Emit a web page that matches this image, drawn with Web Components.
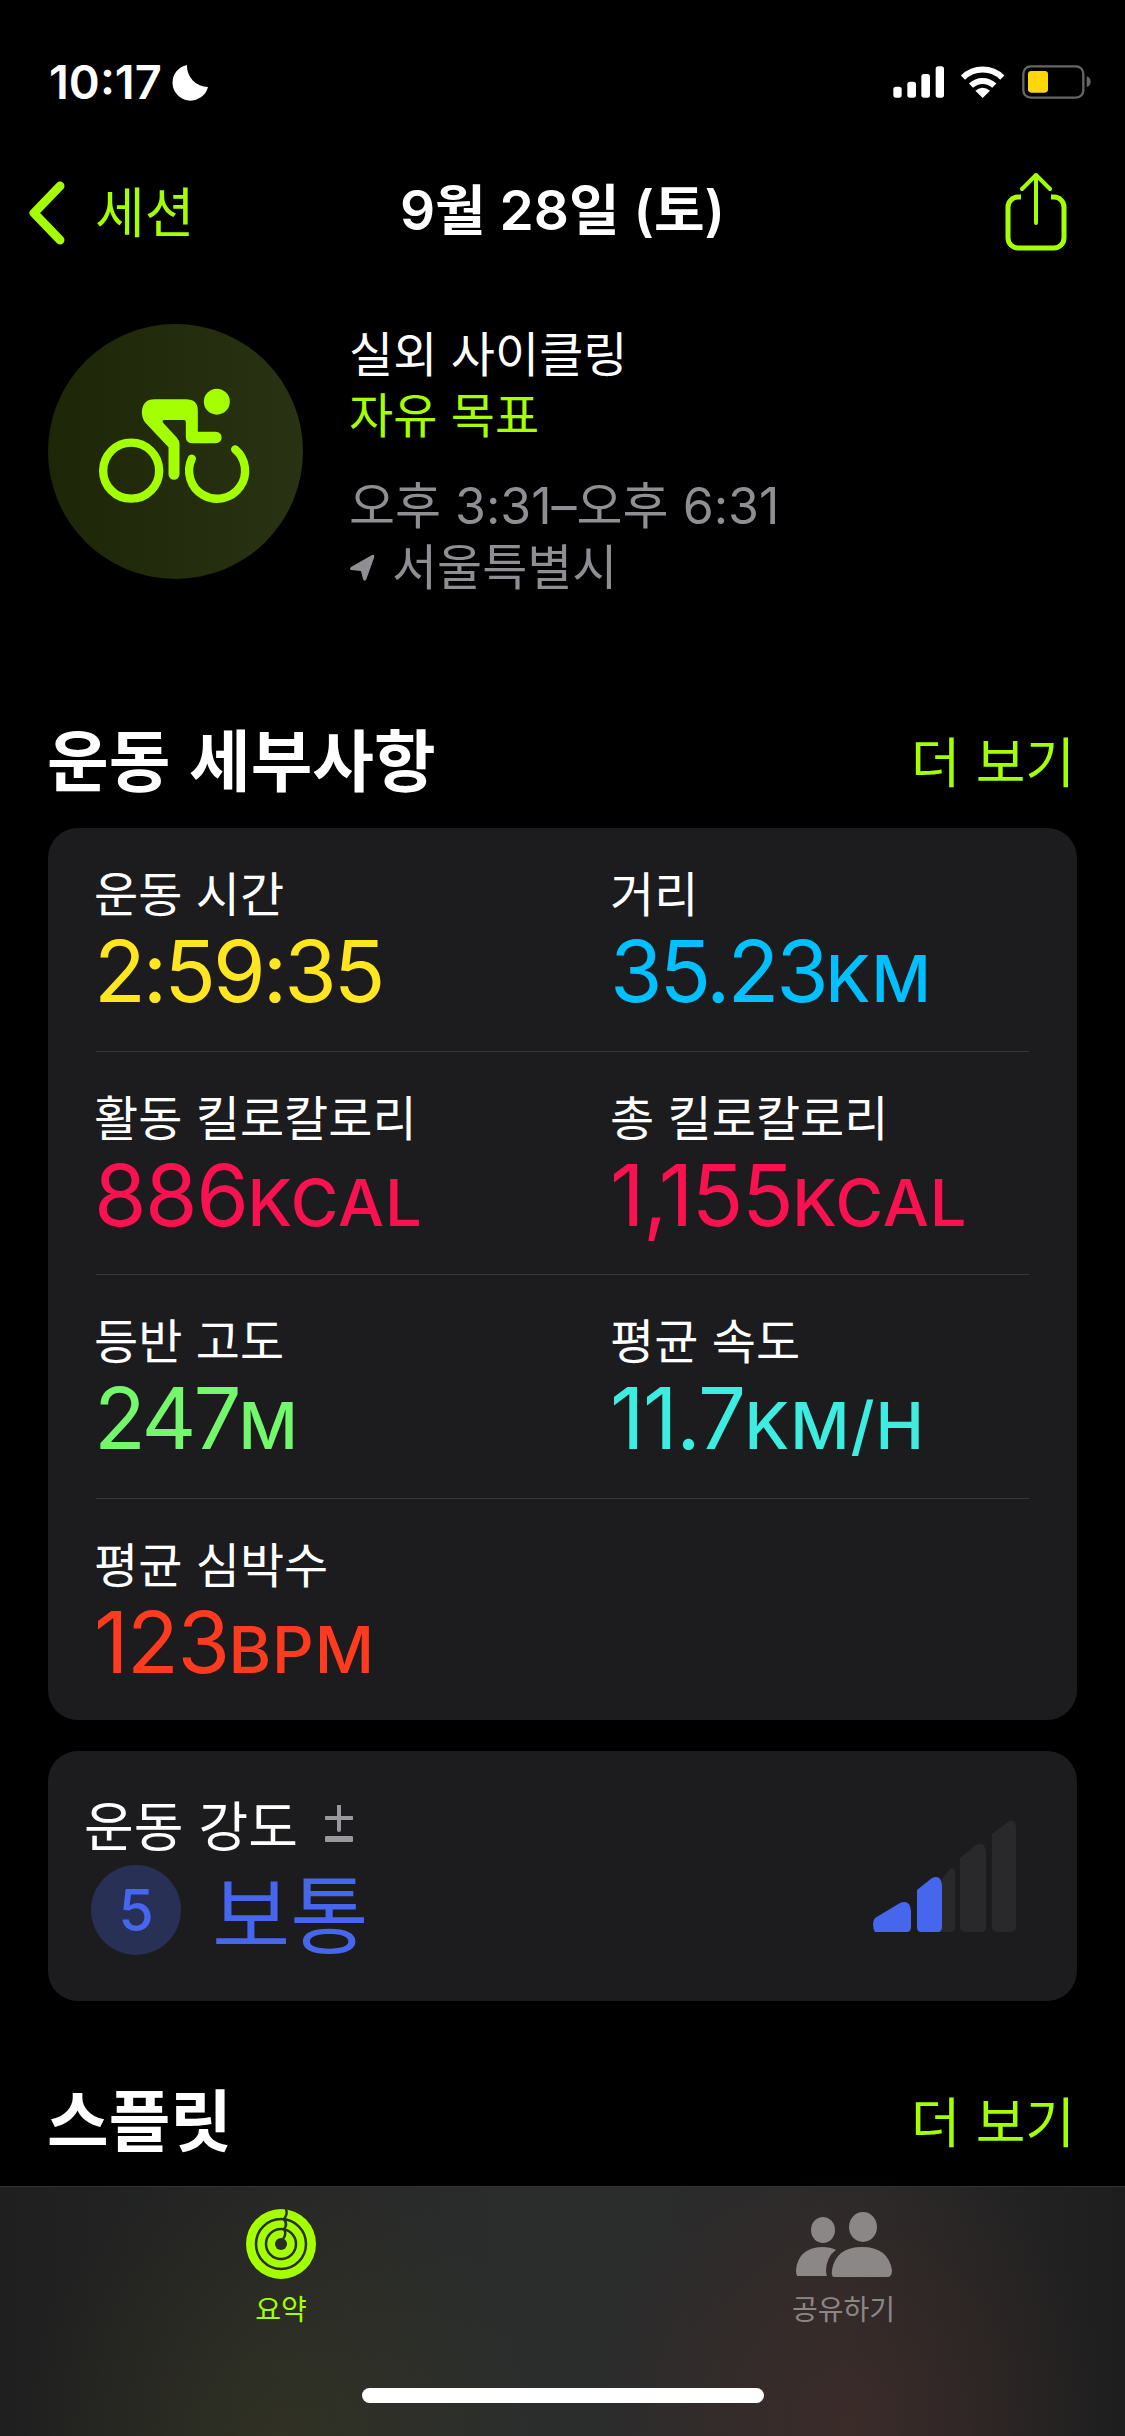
<!DOCTYPE html>
<html lang="ko">
<head>
<meta charset="utf-8">
<title>운동 세부사항</title>
<style>
    html, body {
        margin: 0;
        background: #000;
    }
    body {
        font-family: 'Inter', 'Noto Sans CJK KR', sans-serif;
        color: #fff;
    }
</style>
</head>
<body>
<workout-screen>
    <status-bar time="10:17"></status-bar>
    <nav-bar back="세션" title="9월 28일 (토)"></nav-bar>
    <workout-summary name="실외 사이클링" goal="자유 목표" hours="오후 3:31–오후 6:31" place="서울특별시"></workout-summary>
    <section-head title="운동 세부사항" style="margin-top:120px"></section-head>
    <metric-card>
        <metric-item label="운동 시간" value="2:59:35" color="#ffe620"></metric-item>
        <metric-item label="거리" value="35.23" unit="KM" color="#00c0ff"></metric-item>
        <metric-item label="활동 킬로칼로리" value="886" unit="KCAL" color="#fa1150" tracking="-1.5px"></metric-item>
        <metric-item label="총 킬로칼로리" value="1,155" unit="KCAL" color="#fa1150" tracking="-1.5px"></metric-item>
        <metric-item label="등반 고도" value="247" unit="M" color="#74f76c"></metric-item>
        <metric-item label="평균 속도" value="11.7" unit="KM/H" color="#3deee0" tracking="-1.5px"></metric-item>
        <metric-item label="평균 심박수" value="123" unit="BPM" color="#ff3b1f" tracking="-1.5px"></metric-item>
    </metric-card>
    <effort-card label="운동 강도" level="5" text="보통"></effort-card>
    <section-head title="스플릿" style="margin-top:77px"></section-head>
    <tab-bar slot="tabs"></tab-bar>
</workout-screen>
<script>
const LIME = '#a4ff00';
const KR = "'Noto Sans CJK KR'";
const LATIN = "'Inter', 'Noto Sans CJK KR', sans-serif";

class WorkoutScreen extends HTMLElement {
    connectedCallback() {
        this.attachShadow({ mode: 'open' });
        this.shadowRoot.innerHTML = `
            <style>
                :host {
                    display: flex;
                    flex-direction: column;
                    width: 1125px;
                    height: 2436px;
                    overflow: hidden;
                    background: #000;
                }
                .scroll {
                    flex: 1;
                    min-height: 0;
                    overflow: hidden;
                }
            </style>
            <div class="scroll"><slot></slot></div>
            <slot name="tabs"></slot>
        `;
    }
}

class StatusBar extends HTMLElement {
    connectedCallback() {
        this.attachShadow({ mode: 'open' });
        this.shadowRoot.innerHTML = `
            <style>
                :host {
                    display: flex;
                    justify-content: space-between;
                    height: 140px;
                }
                .left {
                    display: flex;
                    align-items: flex-start;
                    padding: 60px 0 0 49px;
                }
                .time {
                    font: 600 47px/44px ${LATIN};
                    color: #fff;
                }
                svg { display: block; }
                .moon { margin: 4px 0 0 10px; }
                .icons { margin-top: 40px; }
            </style>
            <div class="left">
                <span class="time">${this.getAttribute('time')}</span>
                <svg class="moon" width="38" height="38" viewBox="0 0 38 38">
                    <path fill="#fff" d="M15 1 A18 18 0 1 0 36 23 A21 21 0 0 1 15 1Z"/>
                </svg>
            </div>
            <svg class="icons" width="305" height="100" viewBox="0 0 915 300">
                <rect x="220" y="140" width="25" height="33" rx="8" fill="#fff"/>
                <rect x="262" y="125" width="26" height="48" rx="8" fill="#fff"/>
                <rect x="304" y="102" width="26" height="71" rx="8" fill="#fff"/>
                <rect x="347" y="79" width="25" height="94" rx="8" fill="#fff"/>
                <path d="M429 113A84 84 0 0 1 547 113M453 137A50 50 0 0 1 523 137" fill="none" stroke="#fff" stroke-width="18"/>
                <path d="M488 174L466 152Q488 134 510 152Z" fill="#fff"/>
                <rect x="610" y="79" width="180" height="94" rx="22" fill="none" stroke="#666" stroke-width="7"/>
                <rect x="624" y="93" width="60" height="65" rx="10" fill="#ffd60a"/>
                <path d="M800 109Q812 113 812 125Q812 137 800 141Z" fill="#666"/>
            </svg>
        `;
    }
}

class NavBar extends HTMLElement {
    connectedCallback() {
        this.attachShadow({ mode: 'open' });
        this.shadowRoot.innerHTML = `
            <style>
                :host {
                    display: grid;
                    grid-template-columns: 1fr auto 1fr;
                    align-items: center;
                    height: 140px;
                    padding: 0 28px;
                }
                .back {
                    display: flex;
                    align-items: center;
                    gap: 29px;
                    font: 400 54px/1 ${KR}, sans-serif;
                    color: ${LIME};
                }
                .back svg { margin-top: 6px; }
                .title {
                    font: 600 55px/1 ${LATIN};
                    color: #fff;
                }
                svg { display: block; }
                .share {
                    justify-self: end;
                    margin: 3px 30px 0 0;
                }
            </style>
            <div class="back">
                <svg width="38" height="66" viewBox="0 0 38 66">
                    <path d="M32 6L6 33L32 60" fill="none" stroke="${LIME}" stroke-width="9" stroke-linecap="round" stroke-linejoin="round"/>
                </svg>
                <span>${this.getAttribute('back')}</span>
            </div>
            <div class="title">${this.getAttribute('title')}</div>
            <svg class="share" width="62" height="78" viewBox="0 0 62 78">
                <path d="M16 24H13A10 10 0 0 0 3 34V65A10 10 0 0 0 13 75H49A10 10 0 0 0 59 65V34A10 10 0 0 0 49 24H46" fill="none" stroke="${LIME}" stroke-width="5"/>
                <path d="M31 50V2M17 16L31 2L45 16" fill="none" stroke="${LIME}" stroke-width="4" stroke-linecap="round" stroke-linejoin="round"/>
            </svg>
        `;
    }
}

class WorkoutSummary extends HTMLElement {
    connectedCallback() {
        this.attachShadow({ mode: 'open' });
        this.shadowRoot.innerHTML = `
            <style>
                :host {
                    display: flex;
                    align-items: flex-start;
                    gap: 46px;
                    padding: 44px 48px 0;
                    font-family: ${LATIN};
                }
                .badge {
                    width: 255px;
                    height: 255px;
                    flex: none;
                    border-radius: 50%;
                    background: linear-gradient(90deg, #1e2608, #293213);
                }
                svg { display: block; }
                .lines {
                    font-size: 48px;
                    line-height: 61px;
                }
                .goal { color: ${LIME}; }
                .meta {
                    color: #8e8e93;
                    margin-top: 30px;
                    font-size: 50px;
                }
                .place {
                    display: flex;
                    align-items: center;
                    gap: 17px;
                    margin-top: 0;
                    font-size: 49px;
                }
            </style>
            <div class="badge">
                <svg width="255" height="255" viewBox="0 0 255 255">
                    <g transform="translate(20.500 36) scale(.33333)">
                        <circle cx="445" cy="125" r="39" fill="${LIME}"/>
                        <circle cx="188" cy="332" r="84" fill="none" stroke="${LIME}" stroke-width="25"/>
                        <path d="M370 296A84 84 0 1 0 500 268" fill="none" stroke="${LIME}" stroke-width="25" stroke-linecap="round"/>
                        <path fill="${LIME}" d="M258 118H352Q388 118 388 152V215H442A17.500 17.500 0 0 1 442 250H374Q352 250 352 232V186Q352 180 346 180H288Q278 180 285 190L324 232Q333 242 333 252V343A16 16 0 0 1 300 343V262L232 190Q220 177 220 156Q222 118 258 118Z"/>
                    </g>
                </svg>
            </div>
            <div class="lines">
                <div>${this.getAttribute('name')}</div>
                <div class="goal">${this.getAttribute('goal')}</div>
                <div class="meta">${this.getAttribute('hours')}</div>
                <div class="meta place">
                    <svg width="26" height="28" viewBox="0 0 26 28"><path fill="#8e8e93" d="M23 1Q26 0 25 4L17 26Q15 28 14 25L12 17L2 16Q0 15 2 13Z"/></svg>
                    <span>${this.getAttribute('place')}</span>
                </div>
            </div>
        `;
    }
}

class SectionHead extends HTMLElement {
    connectedCallback() {
        this.attachShadow({ mode: 'open' });
        this.shadowRoot.innerHTML = `
            <style>
                :host {
                    display: flex;
                    justify-content: space-between;
                    align-items: center;
                    height: 76px;
                    padding: 0 50px 0 47px;
                    font-family: ${KR}, sans-serif;
                }
                h2 {
                    margin: 0;
                    font-size: 67px;
                    font-weight: 700;
                    color: #fff;
                }
                span {
                    margin-top: 6px;
                    font-size: 54px;
                    color: ${LIME};
                }
            </style>
            <h2>${this.getAttribute('title')}</h2>
            <span>더 보기</span>
        `;
    }
}

class MetricCard extends HTMLElement {
    connectedCallback() {
        this.attachShadow({ mode: 'open' });
        this.shadowRoot.innerHTML = `
            <style>
                :host {
                    display: block;
                    margin: 34px 48px 0;
                    padding: 0 48px;
                    background: #1c1c1e;
                    border-radius: 30px;
                    height: 892px;
                }
                .grid {
                    display: grid;
                    grid-template-columns: 516px 1fr;
                    grid-auto-rows: 223.500px;
                }
            </style>
            <div class="grid"><slot></slot></div>
        `;
    }
}

class MetricItem extends HTMLElement {
    connectedCallback() {
        this.attachShadow({ mode: 'open' });
        const unit = this.getAttribute('unit');
        this.shadowRoot.innerHTML = `
            <style>
                :host {
                    display: block;
                    height: 223.500px;
                    box-sizing: border-box;
                    padding-top: 31px;
                    border-bottom: 1px solid #38383a;
                }
                :host(:last-child) { border-bottom: none; }
                .label {
                    margin-left: -2px;
                    font: 400 48px/64px ${KR}, sans-serif;
                    color: #fff;
                }
                .value {
                    margin: 5px 0 0 -2px;
                    font: 400 85px/88px ${LATIN};
                    color: ${this.getAttribute('color')};
                    letter-spacing: ${this.getAttribute('tracking') || '-3px'};
                    white-space: nowrap;
                }
                .unit {
                    font-size: 65px;
                    font-weight: 500;
                    letter-spacing: 1px;
                }
            </style>
            <div class="label">${this.getAttribute('label')}</div>
            <div class="value">${this.getAttribute('value')}${unit ? `<span class="unit">${unit}</span>` : ''}</div>
        `;
    }
}

class EffortCard extends HTMLElement {
    connectedCallback() {
        this.attachShadow({ mode: 'open' });
        this.shadowRoot.innerHTML = `
            <style>
                :host {
                    display: block;
                    box-sizing: border-box;
                    margin: 31px 48px 0;
                    height: 250px;
                    padding: 41px 61px 0 36px;
                    background: #1c1c1e;
                    border-radius: 30px;
                    font-family: ${KR}, sans-serif;
                }
                .label {
                    display: flex;
                    align-items: center;
                    gap: 27px;
                    font-size: 54px;
                    line-height: 64px;
                    color: #fff;
                }
                .row {
                    display: flex;
                    align-items: center;
                    height: 90px;
                    margin: 9px 0 0 7px;
                }
                .level {
                    width: 90px;
                    height: 90px;
                    border-radius: 50%;
                    background: #283056;
                    color: #4766ee;
                    display: flex;
                    align-items: center;
                    justify-content: center;
                    font: 500 57px/1 ${LATIN};
                }
                .text {
                    margin-left: 31px;
                    font-size: 85px;
                    line-height: 90px;
                    color: #4766ee;
                }
                svg { display: block; }
                .bars {
                    margin-left: auto;
                    transform: translateY(-34px);
                }
            </style>
            <div class="label">
                <span>${this.getAttribute('label')}</span>
                <svg width="28" height="38" viewBox="0 0 28 38">
                    <path d="M14 1V25M1 13H27" stroke="#98989d" stroke-width="4" stroke-linecap="round" fill="none"/>
                    <path d="M2 34H26" stroke="#98989d" stroke-width="6" stroke-linecap="round" fill="none"/>
                </svg>
            </div>
            <div class="row">
                <div class="level">${this.getAttribute('level')}</div>
                <div class="text">${this.getAttribute('text')}</div>
                <svg class="bars" width="143" height="111" viewBox="0 0 143 111">
                    <path fill="#29292b" d="M69 58L77 48Q81 44 82 53V106Q82 111 78 111H69Z"/>
                    <path fill="#29292b" d="M87 37L103 24Q112 20 113 31V106Q113 111 108 111H92Q87 111 87 106Z"/>
                    <path fill="#29292b" d="M119 13L135 1Q143 -3 143 8V106Q143 111 138 111H124Q119 111 119 106Z"/>
                    <path fill="#4766ee" d="M2 111Q0 108 0 103Q0 100 2 97L27 82Q37 78 38 90V106Q38 111 34 111Z"/>
                    <path fill="#4766ee" d="M44 69L59 57Q68 53 69 64V106Q69 111 65 111H48Q44 111 44 106Z"/>
                </svg>
            </div>
        `;
    }
}

class TabBar extends HTMLElement {
    connectedCallback() {
        this.attachShadow({ mode: 'open' });
        this.shadowRoot.innerHTML = `
            <style>
                :host {
                    display: flex;
                    flex-direction: column;
                    height: 250px;
                    box-sizing: border-box;
                    border-top: 1px solid #333;
                    background:
                        radial-gradient(ellipse 260px 300px at 280px 260px, rgba(70,70,30,.35), transparent),
                        radial-gradient(ellipse 260px 300px at 850px 240px, rgba(80,45,40,.45), transparent),
                        linear-gradient(90deg, #1f1f1f, #2b2d2d 45%, #2a2a2a 75%, #1e1e1e);
                    font-family: ${KR}, sans-serif;
                }
                .tabs {
                    display: grid;
                    grid-template-columns: 562px 1fr;
                    padding-top: 21px;
                }
                .tab {
                    display: flex;
                    flex-direction: column;
                    align-items: center;
                    font-size: 28px;
                    line-height: 40px;
                    gap: 8px;
                }
                .on { color: ${LIME}; }
                .off { color: #8b8787; }
                svg { display: block; }
                .home {
                    align-self: center;
                    width: 402px;
                    height: 15px;
                    border-radius: 8px;
                    background: #fff;
                    margin-top: 60px;
                }
            </style>
            <div class="tabs">
                <div class="tab on">
                    <svg width="72" height="72" viewBox="0 0 72 72">
                        <circle cx="36" cy="36" r="35" fill="${LIME}"/>
                        <circle cx="36" cy="36" r="25" fill="none" stroke="#2a2d23" stroke-width="2.500"/>
                        <circle cx="36" cy="36" r="15" fill="none" stroke="#2a2d23" stroke-width="2.500"/>
                        <circle cx="36" cy="36" r="6" fill="#2a2d23"/>
                        <path d="M41 1Q43 6 39 11Q43 17 39 21Q42 26 38 31" fill="none" stroke="#2a2d23" stroke-width="2.500"/>
                    </svg>
                    <span>요약</span>
                </div>
                <div class="tab off">
                    <svg width="96" height="72" viewBox="0 0 96 72">
                        <ellipse cx="27" cy="22" rx="12" ry="13" fill="#8b8787"/>
                        <ellipse cx="67" cy="19" rx="14" ry="15" fill="#8b8787"/>
                        <path fill="#8b8787" d="M2 68Q0 68 0 62Q2 40 26 39Q35 39 40 42Q31 48 30 62Q30 66 31 68ZM38 69Q35 69 36 62Q40 39 66 39Q92 39 96 62Q96 69 92 69Z"/>
                    </svg>
                    <span>공유하기</span>
                </div>
            </div>
            <div class="home"></div>
        `;
    }
}

customElements.define('workout-screen', WorkoutScreen);
customElements.define('status-bar', StatusBar);
customElements.define('nav-bar', NavBar);
customElements.define('workout-summary', WorkoutSummary);
customElements.define('section-head', SectionHead);
customElements.define('metric-card', MetricCard);
customElements.define('metric-item', MetricItem);
customElements.define('effort-card', EffortCard);
customElements.define('tab-bar', TabBar);
</script>
</body>
</html>
